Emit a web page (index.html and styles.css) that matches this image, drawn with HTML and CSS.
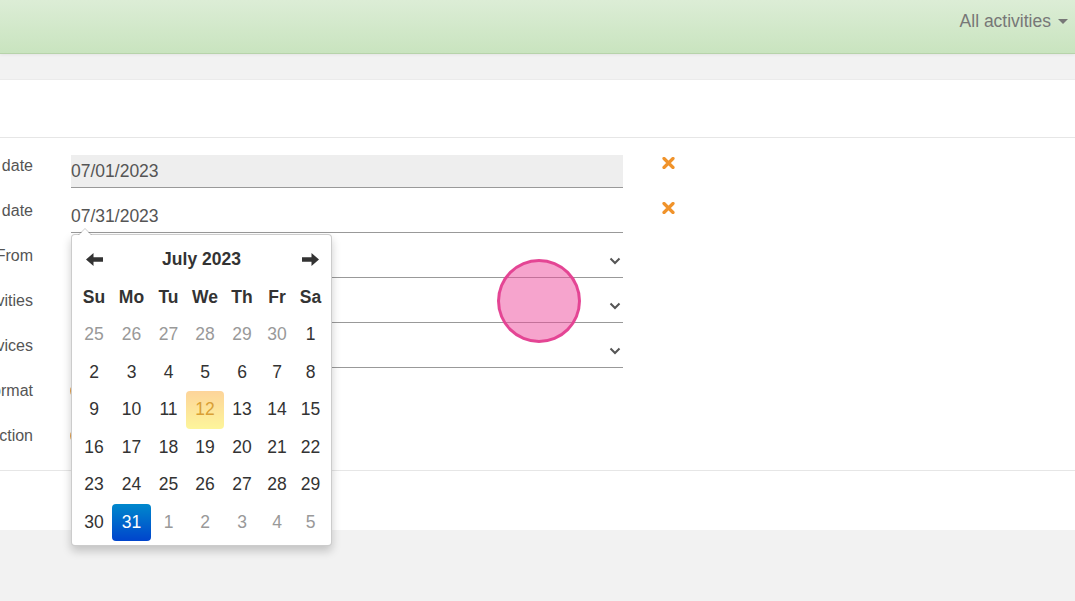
FILE: index.html
```html
<!DOCTYPE html>
<html lang="en">
<head>
<meta charset="utf-8">
<title>Export</title>
<link rel="stylesheet" href="styles.css">
</head>
<body>
<header class="navbar">
  <div class="nav-menu">All activities <span class="caret"></span></div>
</header>
<div class="subbar"></div>
<main class="panel">
  <div class="panel-head"></div>
  <div class="panel-body">
    <form class="form">
      <div class="row">
        <label class="lbl">Start date</label>
        <div class="field readonly">07/01/2023</div>
        <span class="clear"><svg width="13" height="12" viewBox="0 0 13 12"><path d="M2 1.5 L11 10.5 M11 1.5 L2 10.5" stroke="#f0932b" stroke-width="3.2" stroke-linecap="round"/></svg></span>
      </div>
      <div class="row">
        <label class="lbl">End date</label>
        <div class="field">07/31/2023</div>
        <span class="clear"><svg width="13" height="12" viewBox="0 0 13 12"><path d="M2 1.5 L11 10.5 M11 1.5 L2 10.5" stroke="#f0932b" stroke-width="3.2" stroke-linecap="round"/></svg></span>
      </div>
      <div class="row">
        <label class="lbl">From</label>
        <div class="field select"><span></span><svg class="chev" width="12" height="8" viewBox="0 0 12 8"><path d="M1.5 1.5 L6 6 L10.5 1.5" fill="none" stroke="#555" stroke-width="2"/></svg></div>
      </div>
      <div class="row">
        <label class="lbl">Activities</label>
        <div class="field select"><span></span><svg class="chev" width="12" height="8" viewBox="0 0 12 8"><path d="M1.5 1.5 L6 6 L10.5 1.5" fill="none" stroke="#555" stroke-width="2"/></svg></div>
      </div>
      <div class="row">
        <label class="lbl">Devices</label>
        <div class="field select"><span></span><svg class="chev" width="12" height="8" viewBox="0 0 12 8"><path d="M1.5 1.5 L6 6 L10.5 1.5" fill="none" stroke="#555" stroke-width="2"/></svg></div>
      </div>
      <div class="row">
        <label class="lbl">Format</label>
        <div class="radios"><span class="radio"></span></div>
      </div>
      <div class="row">
        <label class="lbl">Direction</label>
        <div class="radios"><span class="radio"></span></div>
      </div>
    </form>
  </div>
  <div class="panel-foot"></div>
</main>

<div class="datepicker">
  <div class="dp-grid">
    <div class="dp-nav"><svg width="17" height="13" viewBox="0 0 17 13"><path d="M0 6.5 L7.5 0 L7.5 4.3 L17 4.3 L17 8.7 L7.5 8.7 L7.5 13 Z" fill="#333"/></svg></div>
    <div class="dp-title">July 2023</div>
    <div class="dp-nav"><svg width="17" height="13" viewBox="0 0 17 13"><path d="M17 6.5 L9.5 0 L9.5 4.3 L0 4.3 L0 8.7 L9.5 8.7 L9.5 13 Z" fill="#333"/></svg></div>

    <div class="dow">Su</div><div class="dow">Mo</div><div class="dow">Tu</div><div class="dow">We</div><div class="dow">Th</div><div class="dow">Fr</div><div class="dow">Sa</div>

    <div class="day old">25</div><div class="day old">26</div><div class="day old">27</div><div class="day old">28</div><div class="day old">29</div><div class="day old">30</div><div class="day">1</div>
    <div class="day">2</div><div class="day">3</div><div class="day">4</div><div class="day">5</div><div class="day">6</div><div class="day">7</div><div class="day">8</div>
    <div class="day">9</div><div class="day">10</div><div class="day">11</div><div class="day today">12</div><div class="day">13</div><div class="day">14</div><div class="day">15</div>
    <div class="day">16</div><div class="day">17</div><div class="day">18</div><div class="day">19</div><div class="day">20</div><div class="day">21</div><div class="day">22</div>
    <div class="day">23</div><div class="day">24</div><div class="day">25</div><div class="day">26</div><div class="day">27</div><div class="day">28</div><div class="day">29</div>
    <div class="day">30</div><div class="day active">31</div><div class="day old">1</div><div class="day old">2</div><div class="day old">3</div><div class="day old">4</div><div class="day old">5</div>
  </div>
</div>

<div class="touch"></div>
</body>
</html>
```

FILE: styles.css
```css
html, body {
  margin: 0;
  padding: 0;
}
body {
  background: #f2f2f2;
  font-family: "Liberation Sans", Arial, sans-serif;
  color: #555;
  overflow: hidden;
  width: 1075px;
  height: 601px;
  position: relative;
}

.navbar {
  height: 53px;
  background: linear-gradient(to bottom, #dcedd6 0%, #c9e4bf 100%);
  border-bottom: 1px solid #b7d3aa;
  box-shadow: 0 1px 3px rgba(0, 0, 0, 0.06);
  display: flex;
  justify-content: flex-end;
  align-items: flex-start;
  padding-right: 7px;
  position: relative;
  z-index: 1;
}
.nav-menu {
  font-size: 17.5px;
  line-height: 20px;
  margin-top: 11px;
  color: #777;
  display: flex;
  align-items: center;
  gap: 7px;
}
.caret {
  width: 0;
  height: 0;
  border-left: 5px solid transparent;
  border-right: 5px solid transparent;
  border-top: 5px solid #777;
  margin-top: 1px;
}

.subbar {
  height: 25px;
  border-bottom: 1px solid #ebebeb;
}

.panel {
  background: #fff;
}
.panel-head {
  height: 57px;
  border-bottom: 1px solid #e6e6e6;
}
.panel-body {
  padding: 17px 0 12px;
  border-bottom: 1px solid #e6e6e6;
}
.panel-foot {
  height: 59px;
}

.form {
  margin-left: -167px;
  display: flex;
  flex-direction: column;
  gap: 12px;
}
.row {
  display: grid;
  grid-template-columns: 200px 552px 14px;
  column-gap: 38px;
  height: 33px;
}
.lbl {
  text-align: right;
  font-size: 16px;
  line-height: 20px;
  padding-top: 1px;
  color: #555;
  white-space: nowrap;
}
.field {
  box-sizing: border-box;
  height: 33px;
  border-bottom: 1px solid #999;
  font-size: 17.5px;
  line-height: 20px;
  padding: 6px 0 6px;
  color: #555;
}
.field.readonly {
  background: #eee;
}
.field.select {
  display: flex;
  justify-content: space-between;
  align-items: center;
  padding: 0 2px 0 0;
}
.chev {
  margin-top: -1px;
}
.clear {
  display: flex;
  justify-content: center;
  padding-top: 2px;
}
.radios {
  margin-left: -1px;
  padding-top: 2px;
}
.radio {
  display: block;
  width: 14px;
  height: 14px;
  border-radius: 50%;
  border: 2px solid #e8a24a;
}

.datepicker {
  position: absolute;
  left: 71px;
  top: 234px;
  width: 261px;
  box-sizing: border-box;
  padding: 6px 4px 4px;
  background: #fff;
  border: 1px solid rgba(0, 0, 0, 0.2);
  border-radius: 4px;
  box-shadow: 0 5px 10px rgba(0, 0, 0, 0.2);
  z-index: 5;
  color: #333;
}
.datepicker::before {
  content: "";
  position: absolute;
  top: -7px;
  left: 6px;
  border-left: 7px solid transparent;
  border-right: 7px solid transparent;
  border-bottom: 7px solid rgba(0, 0, 0, 0.2);
}
.datepicker::after {
  content: "";
  position: absolute;
  top: -6px;
  left: 7px;
  border-left: 6px solid transparent;
  border-right: 6px solid transparent;
  border-bottom: 6px solid #fff;
}
.dp-grid {
  display: grid;
  grid-template-columns: 36px 39px 35px 38px 36px 34px 33px;
  grid-auto-rows: 37.5px;
  font-size: 17.5px;
}
.dp-grid > div {
  display: flex;
  align-items: center;
  justify-content: center;
  border-radius: 4px;
}
.dp-title {
  grid-column: span 5;
  font-weight: bold;
  padding-right: 3px;
}
.dp-nav svg {
  display: block;
}
.dow {
  font-weight: bold;
}
.day.old {
  color: #999;
}
.day.today {
  background: linear-gradient(to bottom, #fdd49a 0%, #fdf59a 100%);
  color: #d9a035;
}
.day.active {
  background: linear-gradient(to bottom, #0088cc 0%, #0044cc 100%);
  color: #fff;
}

.touch {
  position: absolute;
  left: 497px;
  top: 259px;
  width: 78px;
  height: 78px;
  border-radius: 50%;
  border: 3px solid rgba(228, 64, 145, 0.95);
  background: rgba(238, 74, 155, 0.5);
  z-index: 10;
}
```
